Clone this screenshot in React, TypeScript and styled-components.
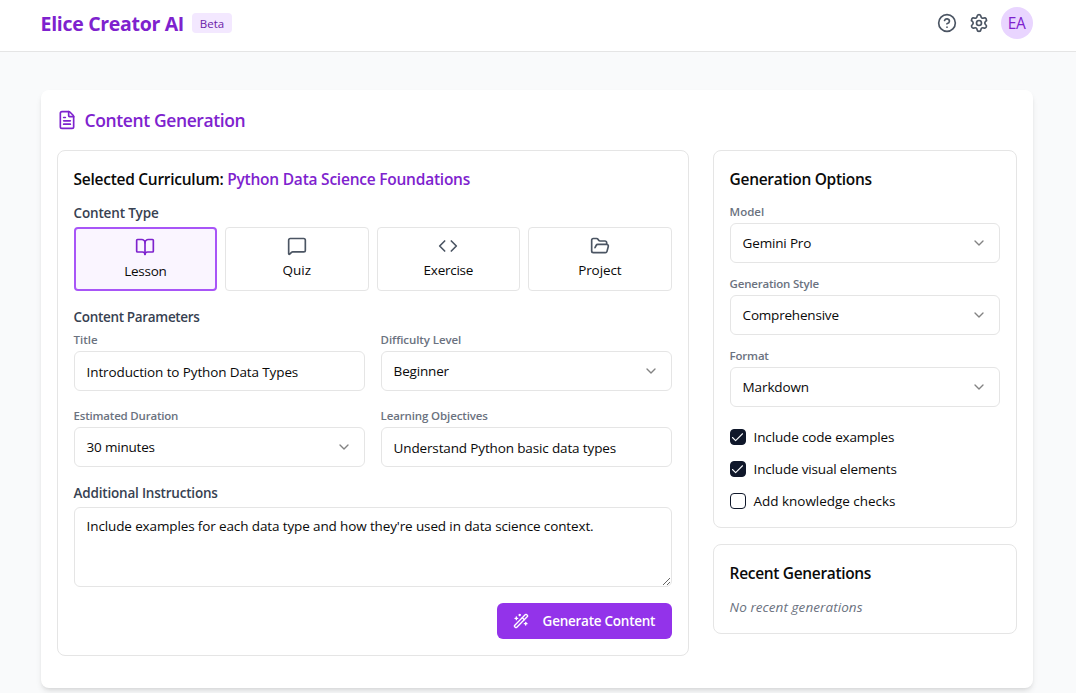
import React from 'react';
import styled, { createGlobalStyle, css } from 'styled-components';
import {
  BookOpen, ChevronDown, CircleHelp, Code, FileText, FolderOpen, MessageSquare, Settings, WandSparkles, Check,
} from 'lucide-react';

const GlobalStyle = createGlobalStyle`
  *, *::before, *::after { box-sizing: border-box; }
  body {
    margin: 0;
    height: 693px;
    overflow: hidden;
    background: #f9fafb;
    color: #0a0a0a;
    font-family: "Segoe UI", "Open Sans", "Noto Sans", sans-serif;
    font-size: 13.5px;
    line-height: 20px;
  }
  h1, h2, h3, h4, p { margin: 0; }
  button, input, textarea { font: inherit; color: inherit; }
  svg { flex-shrink: 0; }
`;

type Spacing = { $ls?: number };
const tracking = css<Spacing>`
  letter-spacing: ${({ $ls = 0 }) => $ls}px;
  white-space: nowrap;
`;

const Header = styled.header`
  display: flex;
  align-items: center;
  justify-content: space-between;
  height: 52px;
  padding: 0 43.4px 5px 40.6px;
  background: #fff;
  border-bottom: 1px solid #e5e5e5;
`;
const Brand = styled.div`
  display: flex;
  align-items: center;
  gap: 8px;
`;
const BrandName = styled.h1<Spacing>`
  ${tracking}
  width: 143.4px;
  height: 28px;
  font-size: 19.5px;
  line-height: 29px;
  font-weight: 700;
  color: #7e22ce;
`;
const Badge = styled.span<Spacing>`
  ${tracking}
  width: 40px;
  height: 20px;
  border-radius: 4px;
  background: #f3e8ff;
  color: #6b21a8;
  font-size: 11.5px;
  line-height: 21px;
  text-align: center;
`;
const Actions = styled.div`
  display: flex;
  align-items: center;
  gap: 12px;
  color: #4b5563;
`;
const Avatar = styled.div<Spacing>`
  ${tracking}
  width: 32px;
  height: 32px;
  border-radius: 50%;
  background: #e9d5ff;
  color: #7e22ce;
  font-size: 15.5px;
  line-height: 33px;
  text-align: center;
`;

const Page = styled.main`
  padding: 38px 43.4px 0 40.6px;
`;
const Card = styled.section`
  height: 598px;
  padding: 16px;
  background: #fff;
  border-radius: 8px;
  box-shadow: 0 4px 6px -1px rgba(0, 0, 0, 0.1), 0 2px 4px -2px rgba(0, 0, 0, 0.1);
`;
const CardTitle = styled.h2<Spacing>`
  ${tracking}
  display: flex;
  align-items: center;
  gap: 8px;
  margin-bottom: 16px;
  font-size: 17.5px;
  line-height: 28px;
  font-weight: 600;
  color: #7e22ce;
`;
const Columns = styled.div`
  display: grid;
  grid-template-columns: 632px 304px;
  gap: 24px;
  align-items: start;
`;
const Side = styled.aside`
  display: grid;
  gap: 16px;
`;
const Panel = styled.div`
  padding: 16px;
  border: 1px solid #e5e5e5;
  border-radius: 8px;
`;
const PanelTitle = styled.h3<Spacing>`
  ${tracking}
  margin-bottom: 12px;
  font-size: 15.5px;
  line-height: 24px;
  font-weight: 600;
`;
const Accent = styled.span<Spacing>`
  ${tracking}
  color: #7e22ce;
`;
const SectionLabel = styled.h4<Spacing>`
  ${tracking}
  margin-bottom: 4px;
  font-weight: 600;
  color: #374151;
`;

const TypeGrid = styled.div`
  display: grid;
  grid-template-columns: repeat(4, 1fr);
  gap: 8px;
  margin-bottom: 16px;
`;
const TypeButton = styled.button<{ $active?: boolean } & Spacing>`
  ${tracking}
  display: flex;
  flex-direction: column;
  align-items: center;
  justify-content: flex-start;
  gap: 4px;
  height: 64px;
  padding: 8px;
  border: ${({ $active }) => ($active ? '2px solid #a855f7' : '1px solid #e5e5e5')};
  border-radius: 4px;
  background: ${({ $active }) => ($active ? '#faf5ff' : '#fff')};
  svg { color: ${({ $active }) => ($active ? '#7e22ce' : '#4b5563')}; }
`;

const FieldGrid = styled.div`
  display: grid;
  grid-template-columns: 1fr 1fr;
  gap: 16px;
  margin-bottom: 16px;
`;
const OptionList = styled.div`
  display: grid;
  gap: 12px;
  margin-bottom: 20px;
`;
const Field = styled.div`
  display: flex;
  flex-direction: column;
  gap: 4px;
`;
const FieldLabel = styled.label<Spacing>`
  ${tracking}
  font-size: 11.5px;
  line-height: 17px;
  height: 16px;
  font-weight: 600;
  color: #6b7280;
`;
const control = css`
  width: 100%;
  border: 1px solid #e5e5e5;
  border-radius: 6px;
  background: #fff;
  outline: none;
`;
const Input = styled.input<Spacing>`
  ${control}
  ${tracking}
  height: 40px;
  padding: 2px 12px 0;
`;
const SelectBox = styled.button<Spacing>`
  ${control}
  ${tracking}
  display: flex;
  align-items: center;
  justify-content: space-between;
  height: 40px;
  padding: 0 12px;
  svg { opacity: 0.5; }
`;
const TextArea = styled.textarea<Spacing>`
  ${control}
  letter-spacing: ${({ $ls = 0 }) => $ls}px;
  display: block;
  height: 80px;
  padding: 8px 12px;
  resize: vertical;
`;
const Footer = styled.div`
  display: flex;
  justify-content: flex-end;
  margin-top: 16px;
`;
const Primary = styled.button<Spacing>`
  ${tracking}
  display: flex;
  align-items: center;
  gap: 14px;
  width: 175px;
  height: 36px;
  padding: 0 16px;
  border: 0;
  border-radius: 6px;
  background: #9333ea;
  color: #fff;
  font-weight: 600;
`;

const Checks = styled.div`
  display: grid;
  gap: 12px;
`;
const CheckRow = styled.label<Spacing>`
  ${tracking}
  display: flex;
  align-items: center;
  gap: 8px;
  height: 20px;
`;
const CheckBox = styled.span<{ $on: boolean }>`
  display: flex;
  align-items: center;
  justify-content: center;
  width: 16px;
  height: 16px;
  border: 1px solid #0f172a;
  border-radius: 4px;
  background: ${({ $on }) => ($on ? '#0f172a' : '#fff')};
  color: #f8fafc;
`;
const Empty = styled.p<Spacing>`
  ${tracking}
  font-style: italic;
  color: #6b7280;
`;

const types = [
  { label: 'Lesson', icon: BookOpen, active: true, ls: -0.25 },
  { label: 'Quiz', icon: MessageSquare, ls: 0 },
  { label: 'Exercise', icon: Code, ls: -0.25 },
  { label: 'Project', icon: FolderOpen, ls: -0.1 },
];
const options = [
  { label: 'Model', value: 'Gemini Pro', lls: 0, ls: -0.17 },
  { label: 'Generation Style', value: 'Comprehensive', lls: -0.2, ls: -0.2 },
  { label: 'Format', value: 'Markdown', lls: -0.2, ls: -0.12 },
];
const checks = [
  { label: 'Include code examples', on: true, ls: -0.15 },
  { label: 'Include visual elements', on: true, ls: -0.17 },
  { label: 'Add knowledge checks', on: false, ls: -0.03 },
];

type FieldProps = { label: string; value: string; lls?: number; ls?: number };

const SelectField = ({ label, value, lls, ls }: FieldProps) => (
  <Field>
    <FieldLabel $ls={lls}>{label}</FieldLabel>
    <SelectBox type="button" $ls={ls}>
      <span>{value}</span>
      <ChevronDown size={16} />
    </SelectBox>
  </Field>
);
const InputField = ({ label, value, lls, ls }: FieldProps) => (
  <Field>
    <FieldLabel $ls={lls}>{label}</FieldLabel>
    <Input defaultValue={value} $ls={ls} />
  </Field>
);

export default function App() {
  return (
    <>
      <GlobalStyle />
      <Header>
        <Brand>
          <BrandName $ls={-0.31}>Elice Creator AI</BrandName>
          <Badge>Beta</Badge>
        </Brand>
        <Actions>
          <CircleHelp size={20} />
          <Settings size={20} />
          <Avatar $ls={-0.3}>EA</Avatar>
        </Actions>
      </Header>
      <Page>
        <Card>
          <CardTitle $ls={-0.39}>
            <FileText size={20} />
            Content Generation
          </CardTitle>
          <Columns>
            <Panel>
              <PanelTitle $ls={-0.27}>
                Selected Curriculum: <Accent $ls={-0.23}>Python Data Science Foundations</Accent>
              </PanelTitle>
              <SectionLabel $ls={-0.17}>Content Type</SectionLabel>
              <TypeGrid>
                {types.map(({ label, icon: Icon, active, ls }) => (
                  <TypeButton key={label} type="button" $active={active} $ls={ls}>
                    <Icon size={20} />
                    <span>{label}</span>
                  </TypeButton>
                ))}
              </TypeGrid>
              <SectionLabel $ls={-0.33}>Content Parameters</SectionLabel>
              <FieldGrid>
                <InputField label="Title" value="Introduction to Python Data Types" ls={-0.12} />
                <SelectField label="Difficulty Level" value="Beginner" lls={-0.08} ls={-0.17} />
                <SelectField label="Estimated Duration" value="30 minutes" lls={-0.2} ls={-0.2} />
                <InputField
                  label="Learning Objectives"
                  value="Understand Python basic data types"
                  lls={-0.13}
                  ls={-0.14}
                />
              </FieldGrid>
              <SectionLabel $ls={-0.2}>Additional Instructions</SectionLabel>
              <TextArea
                $ls={-0.125}
                spellCheck={false}
                defaultValue="Include examples for each data type and how they're used in data science context."
              />
              <Footer>
                <Primary type="button" $ls={-0.25}>
                  <WandSparkles size={16} />
                  Generate Content
                </Primary>
              </Footer>
            </Panel>
            <Side>
              <Panel>
                <PanelTitle $ls={-0.3}>Generation Options</PanelTitle>
                <OptionList>
                  {options.map((o) => (
                    <SelectField key={o.label} {...o} />
                  ))}
                </OptionList>
                <Checks>
                  {checks.map(({ label, on, ls }) => (
                    <CheckRow key={label} $ls={ls}>
                      <CheckBox $on={on}>{on && <Check size={15} strokeWidth={1.7} />}</CheckBox>
                      {label}
                    </CheckRow>
                  ))}
                </Checks>
              </Panel>
              <Panel>
                <PanelTitle $ls={-0.33}>Recent Generations</PanelTitle>
                <Empty $ls={0.07}>No recent generations</Empty>
              </Panel>
            </Side>
          </Columns>
        </Card>
      </Page>
    </>
  );
}
